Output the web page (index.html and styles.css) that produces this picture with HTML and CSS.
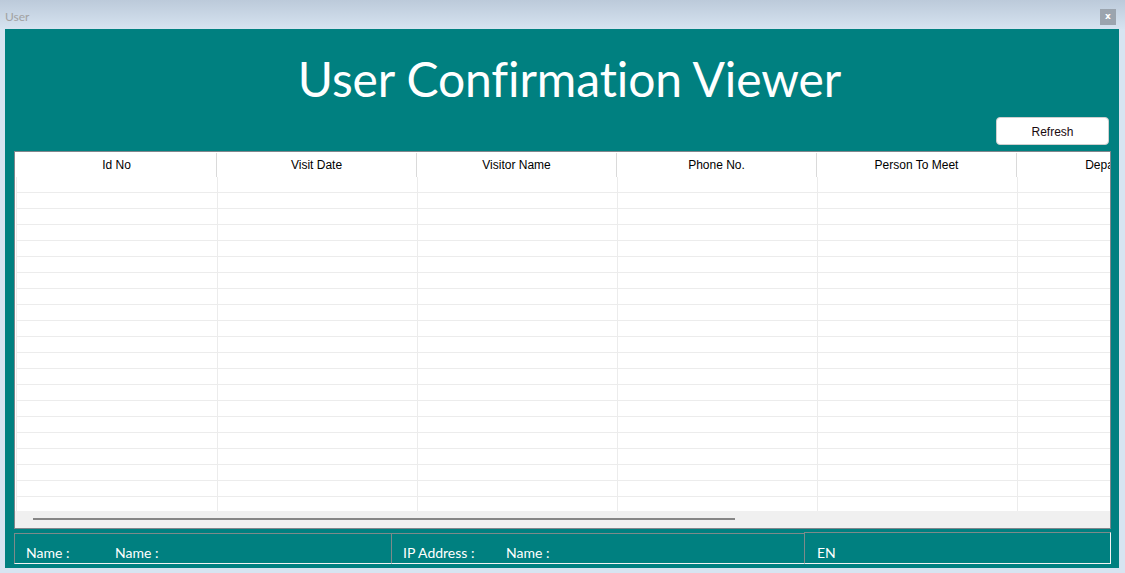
FILE: index.html
```html
<!DOCTYPE html>
<html>
<head>
<meta charset="utf-8">
<title>User</title>
<link rel="stylesheet" href="styles.css">
</head>
<body>
<div class="titlebar">
  <span class="wintitle">User</span>
  <span class="close">x</span>
</div>
<div class="panel">
  <h1 class="heading">User Confirmation Viewer</h1>
  <div class="toolbar"><button class="refresh">Refresh</button></div>
  <div class="grid">
    <div class="grid-head">
      <div class="hcell">Id No</div>
      <div class="hcell">Visit Date</div>
      <div class="hcell">Visitor Name</div>
      <div class="hcell">Phone No.</div>
      <div class="hcell">Person To Meet</div>
      <div class="hcell">Department</div>
    </div>
    <div class="grid-body" id="body"></div>
    <div class="hscroll"><div class="thumb"></div></div>
  </div>
  <div class="footer">
    <div class="fbox fbox1"><span class="lbl lbl1">Name :</span><span class="lbl">Name :</span></div>
    <div class="fbox fbox2"><span class="lbl lbl2">IP Address :</span><span class="lbl">Name :</span></div>
    <div class="fbox fbox3"><span class="lbl">EN</span></div>
  </div>
</div>
<script>
  var b = document.getElementById('body');
  var html = '';
  for (var r = 0; r < 21; r++) {
    html += '<div class="row">';
    for (var c = 0; c < 6; c++) html += '<div class="cell"></div>';
    html += '</div>';
  }
  b.innerHTML = html;
</script>
</body>
</html>
```

FILE: styles.css
```css
* { box-sizing: border-box; }
html, body { margin: 0; padding: 0; }
body {
  width: 1125px;
  height: 573px;
  background: #d7e4f1;
  overflow: hidden;
  font-family: "Lato", "Open Sans", sans-serif;
  font-variant-ligatures: none;
}
.titlebar {
  height: 29px;
  background: linear-gradient(to bottom, #bccada 0%, #d6e3f0 100%);
  display: flex;
  justify-content: space-between;
  align-items: flex-start;
  padding: 0 9px 0 5px;
}
.wintitle {
  margin-top: 10px;
  font-size: 12px;
  line-height: 14px;
  color: #a2a2a2;
}
.close {
  margin-top: 9px;
  width: 16px;
  height: 16px;
  background: #9ba4ae;
  color: #fff;
  font-family: "DejaVu Sans", sans-serif;
  font-weight: bold;
  font-size: 9px;
  line-height: 15px;
  text-align: center;
}
.panel {
  width: 1114px;
  height: 539px;
  margin-left: 5px;
  background: #008080;
  padding: 0 8px 4px 9px;
  display: flex;
  flex-direction: column;
}
.heading {
  margin: 0;
  height: 88px;
  padding: 26px 0 0 14px;
  font-size: 48px;
  line-height: 48px;
  font-weight: normal;
  font-variant-ligatures: none;
  letter-spacing: -0.1px;
  color: #fff;
  text-align: center;
}
.toolbar {
  height: 28px;
  margin-bottom: 6px;
  display: flex;
  justify-content: flex-end;
  padding-right: 2px;
}
.refresh {
  width: 113px;
  height: 28px;
  margin: 0;
  background: #fff;
  border: 1px solid #cfcfcf;
  border-radius: 4px;
  font-family: "Liberation Sans", Arial, sans-serif;
  font-size: 12px;
  color: #1a0a10;
  padding: 2px 0 0 0;
}
.grid {
  height: 378px;
  border: 1px solid #80868c;
  background: #fff;
  display: flex;
  flex-direction: column;
  overflow: hidden;
}
.grid-head {
  height: 25px;
  display: flex;
  padding-left: 2px;
  flex: 0 0 auto;
  font-family: "Liberation Sans", Arial, sans-serif;
  font-size: 12px;
  color: #000;
}
.hcell {
  flex: 0 0 200px;
  width: 200px;
  height: 24px;
  margin-top: 1px;
  border-right: 1px solid #dadada;
  text-align: center;
  line-height: 25px;
  white-space: nowrap;
  overflow: hidden;
}
.grid-body {
  height: 334px;
  flex: 0 0 auto;
  overflow: hidden;
}
.row {
  height: 16px;
  display: flex;
  margin-left: 1px;
  padding-left: 1px;
  border-left: 1px solid #ececec;
  border-bottom: 1px solid #ececec;
}
.cell {
  flex: 0 0 200px;
  width: 200px;
  border-right: 1px solid #ececec;
}
.hscroll {
  height: 17px;
  flex: 0 0 auto;
  background: #f0f0f0;
  padding: 7px 0 0 18px;
}
.thumb {
  width: 702px;
  height: 2px;
  background: #868686;
}
.footer {
  margin-top: 3px;
  height: 32px;
  display: flex;
  align-items: flex-start;
  color: #fff;
  font-size: 14px;
  line-height: 17px;
}
.fbox {
  display: flex;
  border-top: 1px solid #7d8a8a;
  border-left: 1px solid #7d8a8a;
  border-bottom: 1px solid #f4f4f4;
  white-space: nowrap;
}
.fbox1 {
  width: 377px;
  height: 31px;
  margin-top: 1px;
  padding: 10px 0 0 11px;
}
.fbox2 {
  width: 413px;
  height: 31px;
  margin-top: 1px;
  padding: 10px 0 0 11px;
}
.fbox3 {
  flex: 1 1 auto;
  height: 32px;
  padding: 11px 0 0 12px;
  border-right: 1px solid #f4f4f4;
}
.lbl1 { width: 89px; }
.lbl2 { width: 103px; }
```
